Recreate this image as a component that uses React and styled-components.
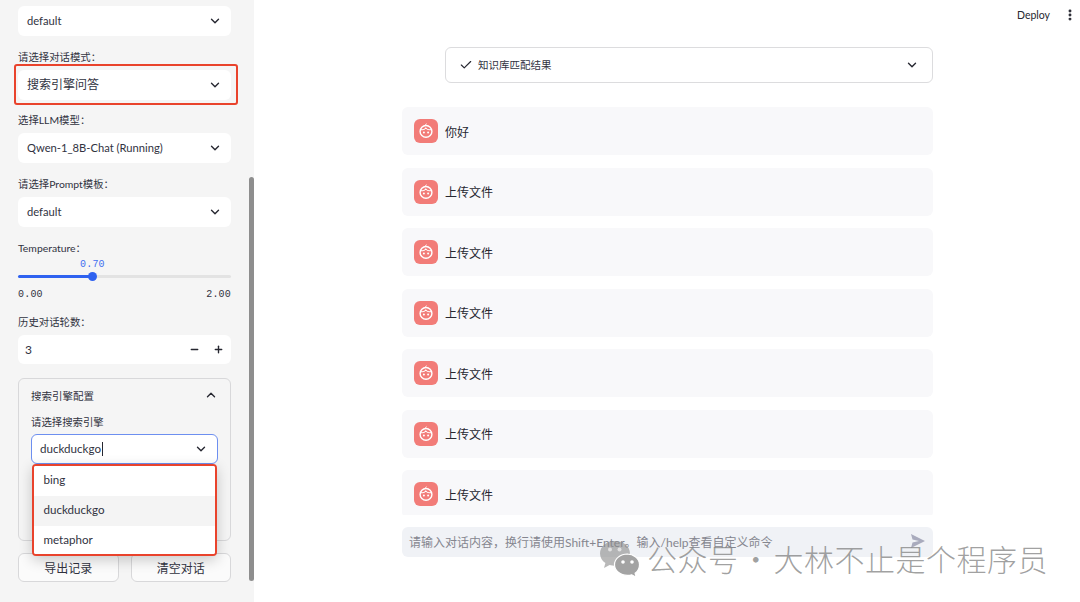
import React from 'react'
import styled, { createGlobalStyle } from 'styled-components'
import { ChevronDown, ChevronUp, Check, Minus, Plus, EllipsisVertical } from 'lucide-react'

const GlobalStyle = createGlobalStyle`
  html, body {
    margin: 0;
    height: 100%;
    overflow: hidden;
    background: #fff;
    font-family: Lato, "Noto Sans CJK SC", sans-serif;
    color: #31333f;
  }
  * { box-sizing: border-box; }
`

const FaceIcon = () => (
  <svg width="16" height="16" viewBox="0 0 16 16" fill="none">
    <circle cx="8" cy="8.400" r="5.900" stroke="#fff" strokeWidth="1.400" />
    <path d="M2.800 6.600c2 .5 3.800 0 5-1.600 1.200 1.600 3.300 2.100 5.500 1.500" stroke="#fff" strokeWidth="1.100" />
    <path d="M8 2.600c-.8-.8-.4-1.800.6-1.800" stroke="#fff" strokeWidth="0.900" />
    <circle cx="5.900" cy="9.500" r="1" fill="#fff" />
    <circle cx="10.100" cy="9.500" r="1" fill="#fff" />
  </svg>
)

const WeChatIcon = () => (
  <svg width="42" height="38" viewBox="0 0 42 38">
    <path d="M16 1C7.700 1 1 6.500 1 13.400c0 3.900 2.100 7.300 5.400 9.600L5 28l5.600-3c1.700.5 3.500.8 5.400.8 8.300 0 15-5.500 15-12.400S24.300 1 16 1z" fill="#8a8a8a" fillOpacity="0.6" />
    <path d="M28.500 14c-7.200 0-13 4.800-13 10.700s5.800 10.700 13 10.700c1.500 0 2.900-.2 4.300-.6l4.400 2.400-1.100-4c2.900-2 4.400-5 4.400-8.500 0-5.900-5.800-10.700-12.600-10.700z" fill="#a3a3a3" stroke="#fff" strokeWidth="1.200" />
    <circle cx="24" cy="22" r="1.800" fill="#fff" />
    <circle cx="33" cy="22" r="1.800" fill="#fff" />
    <circle cx="11" cy="9.500" r="2" fill="#fff" fillOpacity="0.6" />
    <circle cx="20.500" cy="9.500" r="2" fill="#fff" fillOpacity="0.6" />
  </svg>
)

const messages = ['你好', '上传文件', '上传文件', '上传文件', '上传文件', '上传文件', '上传文件']
const engines = ['bing', 'duckduckgo', 'metaphor']

const SelectBox = ({ value, latin }) => (
  <Select latin={latin}>
    <span>{value}</span>
    <ChevronDown size={14} strokeWidth={2.4} color="#262730" />
  </Select>
)

const App = () => {
  return (
    <Page>
      <GlobalStyle />
      <Sidebar>
        <SelectBox latin value="default" />
        <Field>
          <Label>{'请选择对话模式\uFF1A'}</Label>
          <Highlight>
            <SelectBox value="搜索引擎问答" />
          </Highlight>
        </Field>
        <Field>
          <Label>{'选择LLM模型\uFF1A'}</Label>
          <SelectBox latin value="Qwen-1_8B-Chat (Running)" />
        </Field>
        <Field>
          <Label>{'请选择Prompt模板\uFF1A'}</Label>
          <SelectBox latin value="default" />
        </Field>
        <SliderField>
          <Label>{'Temperature\uFF1A'}</Label>
          <SliderValue>0.70</SliderValue>
          <Track>
            <Thumb />
          </Track>
          <SliderRange>
            <span>0.00</span>
            <span>2.00</span>
          </SliderRange>
        </SliderField>
        <Field>
          <Label>{'历史对话轮数\uFF1A'}</Label>
          <NumberBox>
            <span>3</span>
            <Steppers>
              <Minus size={11} strokeWidth={3} />
              <Plus size={11} strokeWidth={3} />
            </Steppers>
          </NumberBox>
        </Field>
        <Expander>
          <ExpanderHead>
            <span>搜索引擎配置</span>
            <ChevronUp size={14} strokeWidth={2.4} color="#262730" />
          </ExpanderHead>
          <EngineLabel>请选择搜索引擎</EngineLabel>
          <EngineWrap>
            <EngineInput>
              <span>duckduckgo<Caret /></span>
              <ChevronDown size={14} strokeWidth={2.4} color="#262730" />
            </EngineInput>
            <Dropdown>
              {engines.map(name => (
                <Option key={name} active={name === 'duckduckgo'}>{name}</Option>
              ))}
            </Dropdown>
          </EngineWrap>
        </Expander>
        <Buttons>
          <Button>导出记录</Button>
          <Button>清空对话</Button>
        </Buttons>
        <Scrollbar />
      </Sidebar>
      <Main>
        <TopBar>
          <Deploy>Deploy</Deploy>
          <EllipsisVertical size={14} strokeWidth={3} color="#262730" />
        </TopBar>
        <Content>
          <Matches>
            <MatchesTitle>
              <Check size={14} strokeWidth={2} color="#262730" />
              <span>知识库匹配结果</span>
            </MatchesTitle>
            <ChevronDown size={14} strokeWidth={2.4} color="#262730" />
          </Matches>
          <ChatList>
            {messages.map((text, i) => (
              <Message key={i}>
                <Avatar>
                  <FaceIcon />
                </Avatar>
                <span>{text}</span>
              </Message>
            ))}
          </ChatList>
          <ChatInput>
            <span>{'请输入对话内容\uFF0C换行请使用Shift+Enter\u3002输入/help查看自定义命令'}</span>
            <svg width="16" height="14" viewBox="0 0 16 14">
              <path d="M1 0l14 7-14 7 1.500-5.500L9 7 2.500 5.500z" fill="#a9abbd" />
            </svg>
          </ChatInput>
        </Content>
        <Watermark>
          <WatermarkIcon>
            <WeChatIcon />
          </WatermarkIcon>
          <span>公众号<WatermarkDot>·</WatermarkDot>大林不止是个程序员</span>
        </Watermark>
      </Main>
    </Page>
  )
}

export default App

const Page = styled.div`
  display: flex;
  width: 1080px;
  height: 602px;
  overflow: hidden;
`

const Sidebar = styled.aside`
  position: relative;
  flex: 0 0 254px;
  height: 602px;
  padding: 6px 23px 0 18px;
  background: #f5f5f5;
  overflow: hidden;
`

const Scrollbar = styled.div`
  position: absolute;
  top: 177px;
  right: 0;
  width: 5px;
  height: 404px;
  border-radius: 3px;
  background: #8e8e8e;
`

const Field = styled.div`
  margin-top: 13.700px;
`

const Label = styled.div`
  height: 16px;
  margin-bottom: 4px;
  font-size: 10.400px;
  line-height: 15px;
  color: #31333f;
  white-space: nowrap;
`

const EngineLabel = styled(Label)`
  margin-bottom: 3px;
`

const Select = styled.div`
  display: flex;
  align-items: center;
  justify-content: space-between;
  height: 30px;
  padding: 0 9px;
  border-radius: 6px;
  background: #fff;
  font-size: ${props => (props.latin ? '11.200px' : '12px')};
  line-height: 28px;
  color: #31333f;
`

const Highlight = styled.div`
  position: relative;
  &::after {
    content: '';
    position: absolute;
    top: -6px;
    left: -4.500px;
    right: -7px;
    bottom: -5.500px;
    border: 2px solid #e9432c;
    border-radius: 3px;
  }
`

const SliderField = styled.div`
  margin-top: 14px;
`

const SliderValue = styled.div`
  margin: -3px 0 0 62px;
  height: 14px;
  font-family: "Liberation Mono", monospace;
  font-size: 10px;
  line-height: 14px;
  letter-spacing: 0.200px;
  color: #3f6ff0;
`

const Track = styled.div`
  position: relative;
  height: 3px;
  margin-top: 3px;
  border-radius: 2px;
  background: linear-gradient(to right, #2f62f0 35%, #e3e3e3 35%);
`

const Thumb = styled.div`
  position: absolute;
  top: -3px;
  left: 70px;
  width: 9px;
  height: 9px;
  border-radius: 50%;
  background: #2f62f0;
`

const SliderRange = styled.div`
  display: flex;
  justify-content: space-between;
  margin-top: 10px;
  font-family: "Liberation Mono", monospace;
  font-size: 10px;
  line-height: 13px;
  letter-spacing: 0.200px;
  color: #31333f;
`

const NumberBox = styled.div`
  display: flex;
  align-items: center;
  justify-content: space-between;
  height: 29px;
  padding: 0 7px;
  border-radius: 6px;
  background: #fff;
  font-size: 12px;
`

const Steppers = styled.div`
  display: flex;
  gap: 13px;
  color: #262730;
`

const Expander = styled.section`
  margin-top: 14px;
  height: 163px;
  padding: 8px 12px 0;
  border: 1px solid #d8d8da;
  border-radius: 6px;
`

const ExpanderHead = styled.div`
  display: flex;
  align-items: center;
  justify-content: space-between;
  height: 17px;
  margin-bottom: 11px;
  font-size: 10.500px;
`

const EngineWrap = styled.div`
  position: relative;
`

const EngineInput = styled.div`
  display: flex;
  align-items: center;
  justify-content: space-between;
  height: 30px;
  padding: 0 9px 0 8px;
  border: 1px solid #6d8ff0;
  border-radius: 6px;
  background: #fff;
  font-size: 11.600px;
`

const Caret = styled.i`
  display: inline-block;
  width: 1px;
  height: 14px;
  margin-left: 1px;
  vertical-align: -3px;
  background: #262730;
`

const Dropdown = styled.div`
  position: absolute;
  top: 30px;
  left: 0.500px;
  width: 185px;
  height: 92px;
  z-index: 2;
  border: 2px solid #e9432c;
  border-radius: 4px;
  background: #fff;
  box-shadow: 0 4px 14px rgba(0, 0, 0, 0.2);
  overflow: hidden;
`

const Option = styled.div`
  height: 30px;
  padding-left: 10px;
  font-size: 11.600px;
  line-height: 28px;
  background: ${props => (props.active ? '#f4f4f4' : '#fff')};
`

const Buttons = styled.div`
  display: grid;
  grid-template-columns: 100.500px 100.500px;
  justify-content: space-between;
  margin-top: 12.500px;
`

const Button = styled.div`
  display: flex;
  align-items: center;
  justify-content: center;
  height: 29px;
  border: 1px solid #d8d8da;
  border-radius: 6px;
  background: #fbfbfb;
  font-size: 12px;
`

const Main = styled.main`
  position: relative;
  flex: 1;
  height: 602px;
  background: #fff;
`

const TopBar = styled.header`
  display: flex;
  align-items: center;
  justify-content: flex-end;
  height: 30px;
  padding-right: 3px;
`

const Deploy = styled.div`
  margin-right: 13px;
  font-size: 10.500px;
  color: #262730;
`

const Content = styled.div`
  display: flex;
  flex-direction: column;
  width: 531px;
  margin: 0 0 0 148px;
`

const Matches = styled.div`
  display: flex;
  align-items: center;
  justify-content: space-between;
  height: 36px;
  margin: 17px 0 24px 43px;
  padding: 0 13px 1px;
  border: 1px solid #dcdcde;
  border-radius: 6px;
  font-size: 10.500px;
`

const MatchesTitle = styled.div`
  display: flex;
  align-items: center;
  gap: 5px;
`

const ChatList = styled.div`
  display: flex;
  flex-direction: column;
  gap: 12.500px;
  height: 408px;
  overflow: hidden;
`

const Message = styled.div`
  display: flex;
  flex: 0 0 48px;
  align-items: center;
  gap: 7px;
  padding: 0 12px;
  border-radius: 6px;
  background: #f8f8fa;
  font-size: 12px;
  color: #262730;
`

const Avatar = styled.div`
  display: flex;
  align-items: center;
  justify-content: center;
  width: 24px;
  height: 24px;
  border-radius: 6px;
  background: #f27c78;
`

const ChatInput = styled.div`
  display: flex;
  align-items: center;
  justify-content: space-between;
  height: 30px;
  margin-top: 12px;
  padding: 0 7px 2px;
  border-radius: 6px;
  background: #f0f2f6;
  font-size: 12px;
  color: #85868f;
`

const Watermark = styled.div`
  position: absolute;
  top: 538px;
  left: 345px;
  display: flex;
  align-items: center;
  gap: 6px;
  font-family: "Noto Sans CJK SC", sans-serif;
  font-size: 30px;
  line-height: 38px;
  letter-spacing: 0.500px;
  font-weight: 300;
  color: rgba(130, 130, 130, 0.75);
  white-space: nowrap;
`

const WatermarkIcon = styled.div`
  display: flex;
  margin-top: 2px;
`

const WatermarkDot = styled.span`
  display: inline-block;
  width: 35px;
  text-align: center;
`
